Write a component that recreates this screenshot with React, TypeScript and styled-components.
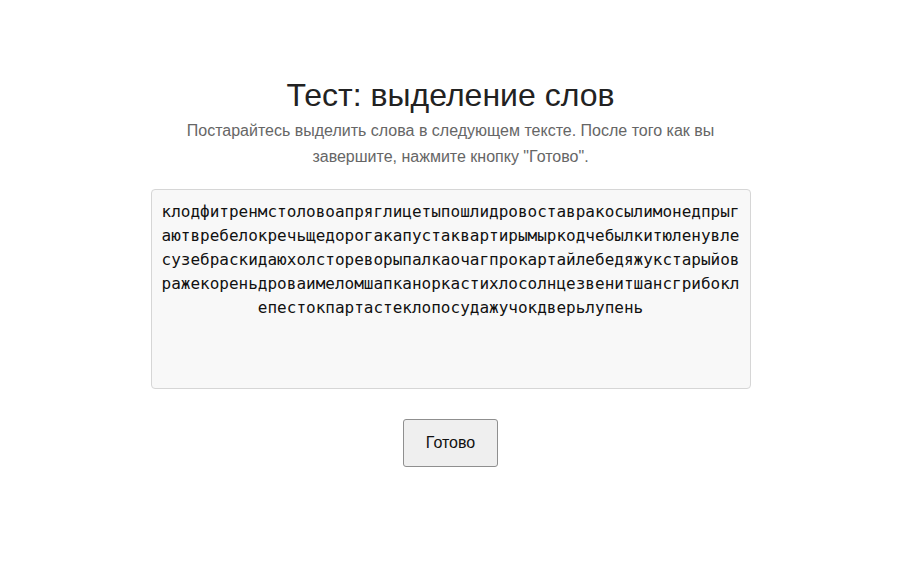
import React from 'react'
import styled, { createGlobalStyle } from 'styled-components'

const GlobalStyle = createGlobalStyle`
  body {
    margin: 0;
    background: #fff;
    font-family: "Liberation Sans", Arial, sans-serif;
  }
`

const Page = styled.div`
  display: flex;
  flex-direction: column;
  align-items: center;
  padding-top: 76px;
  padding-left: 2px;
`

const Title = styled.h1`
  margin: 0;
  font-size: 32px;
  line-height: 38px;
  font-weight: normal;
  color: #222;
  text-align: center;
`

const Intro = styled.p`
  margin: 4px 0 0;
  width: 600px;
  font-size: 16px;
  line-height: 26px;
  color: #666;
  text-align: center;
`

const TextBox = styled.div`
  box-sizing: border-box;
  margin-top: 19px;
  width: 600px;
  height: 200px;
  padding: 10px 4px;
  background: #f8f8f8;
  border: 1px solid #d6d6d6;
  border-radius: 4px;
  font-family: "DejaVu Sans Mono", monospace;
  font-size: 16px;
  line-height: 24px;
  color: #111;
  text-align: center;
`

const Line = styled.div`
  white-space: nowrap;
`

const DoneButton = styled.button`
  margin-top: 30px;
  padding: 14px 21.5px;
  font-family: "Liberation Sans", Arial, sans-serif;
  font-size: 16px;
  line-height: 18px;
  color: #111;
  background: #efefef;
  border: 1px solid #8f8f8f;
  border-radius: 3px;
  cursor: pointer;
`

const lines = [
  'клодфитренмстоловоапряглицетыпошлидровоставракосылимонедпрыг',
  'аютвребелокречьщедорогакапустаквартирымыркодчебылкитюленувле',
  'сузебраскидаюхолстореворыпалкаочагпрокартайлебедяжукстарыйов',
  'ражекореньдроваимеломшапканоркастихлосолнцезвенитшансгрибокл',
  'епестокпартастеклопосудажучокдверьлупень',
]

const App: React.FC = () => {
  return (
    <>
      <GlobalStyle />
      <Page>
        <Title>Тест: выделение слов</Title>
        <Intro>
          Постарайтесь выделить слова в следующем тексте. После того как вы завершите, нажмите кнопку "Готово".
        </Intro>
        <TextBox>
          {lines.map((line) => (
            <Line key={line}>{line}</Line>
          ))}
        </TextBox>
        <DoneButton>Готово</DoneButton>
      </Page>
    </>
  )
}

export default App
